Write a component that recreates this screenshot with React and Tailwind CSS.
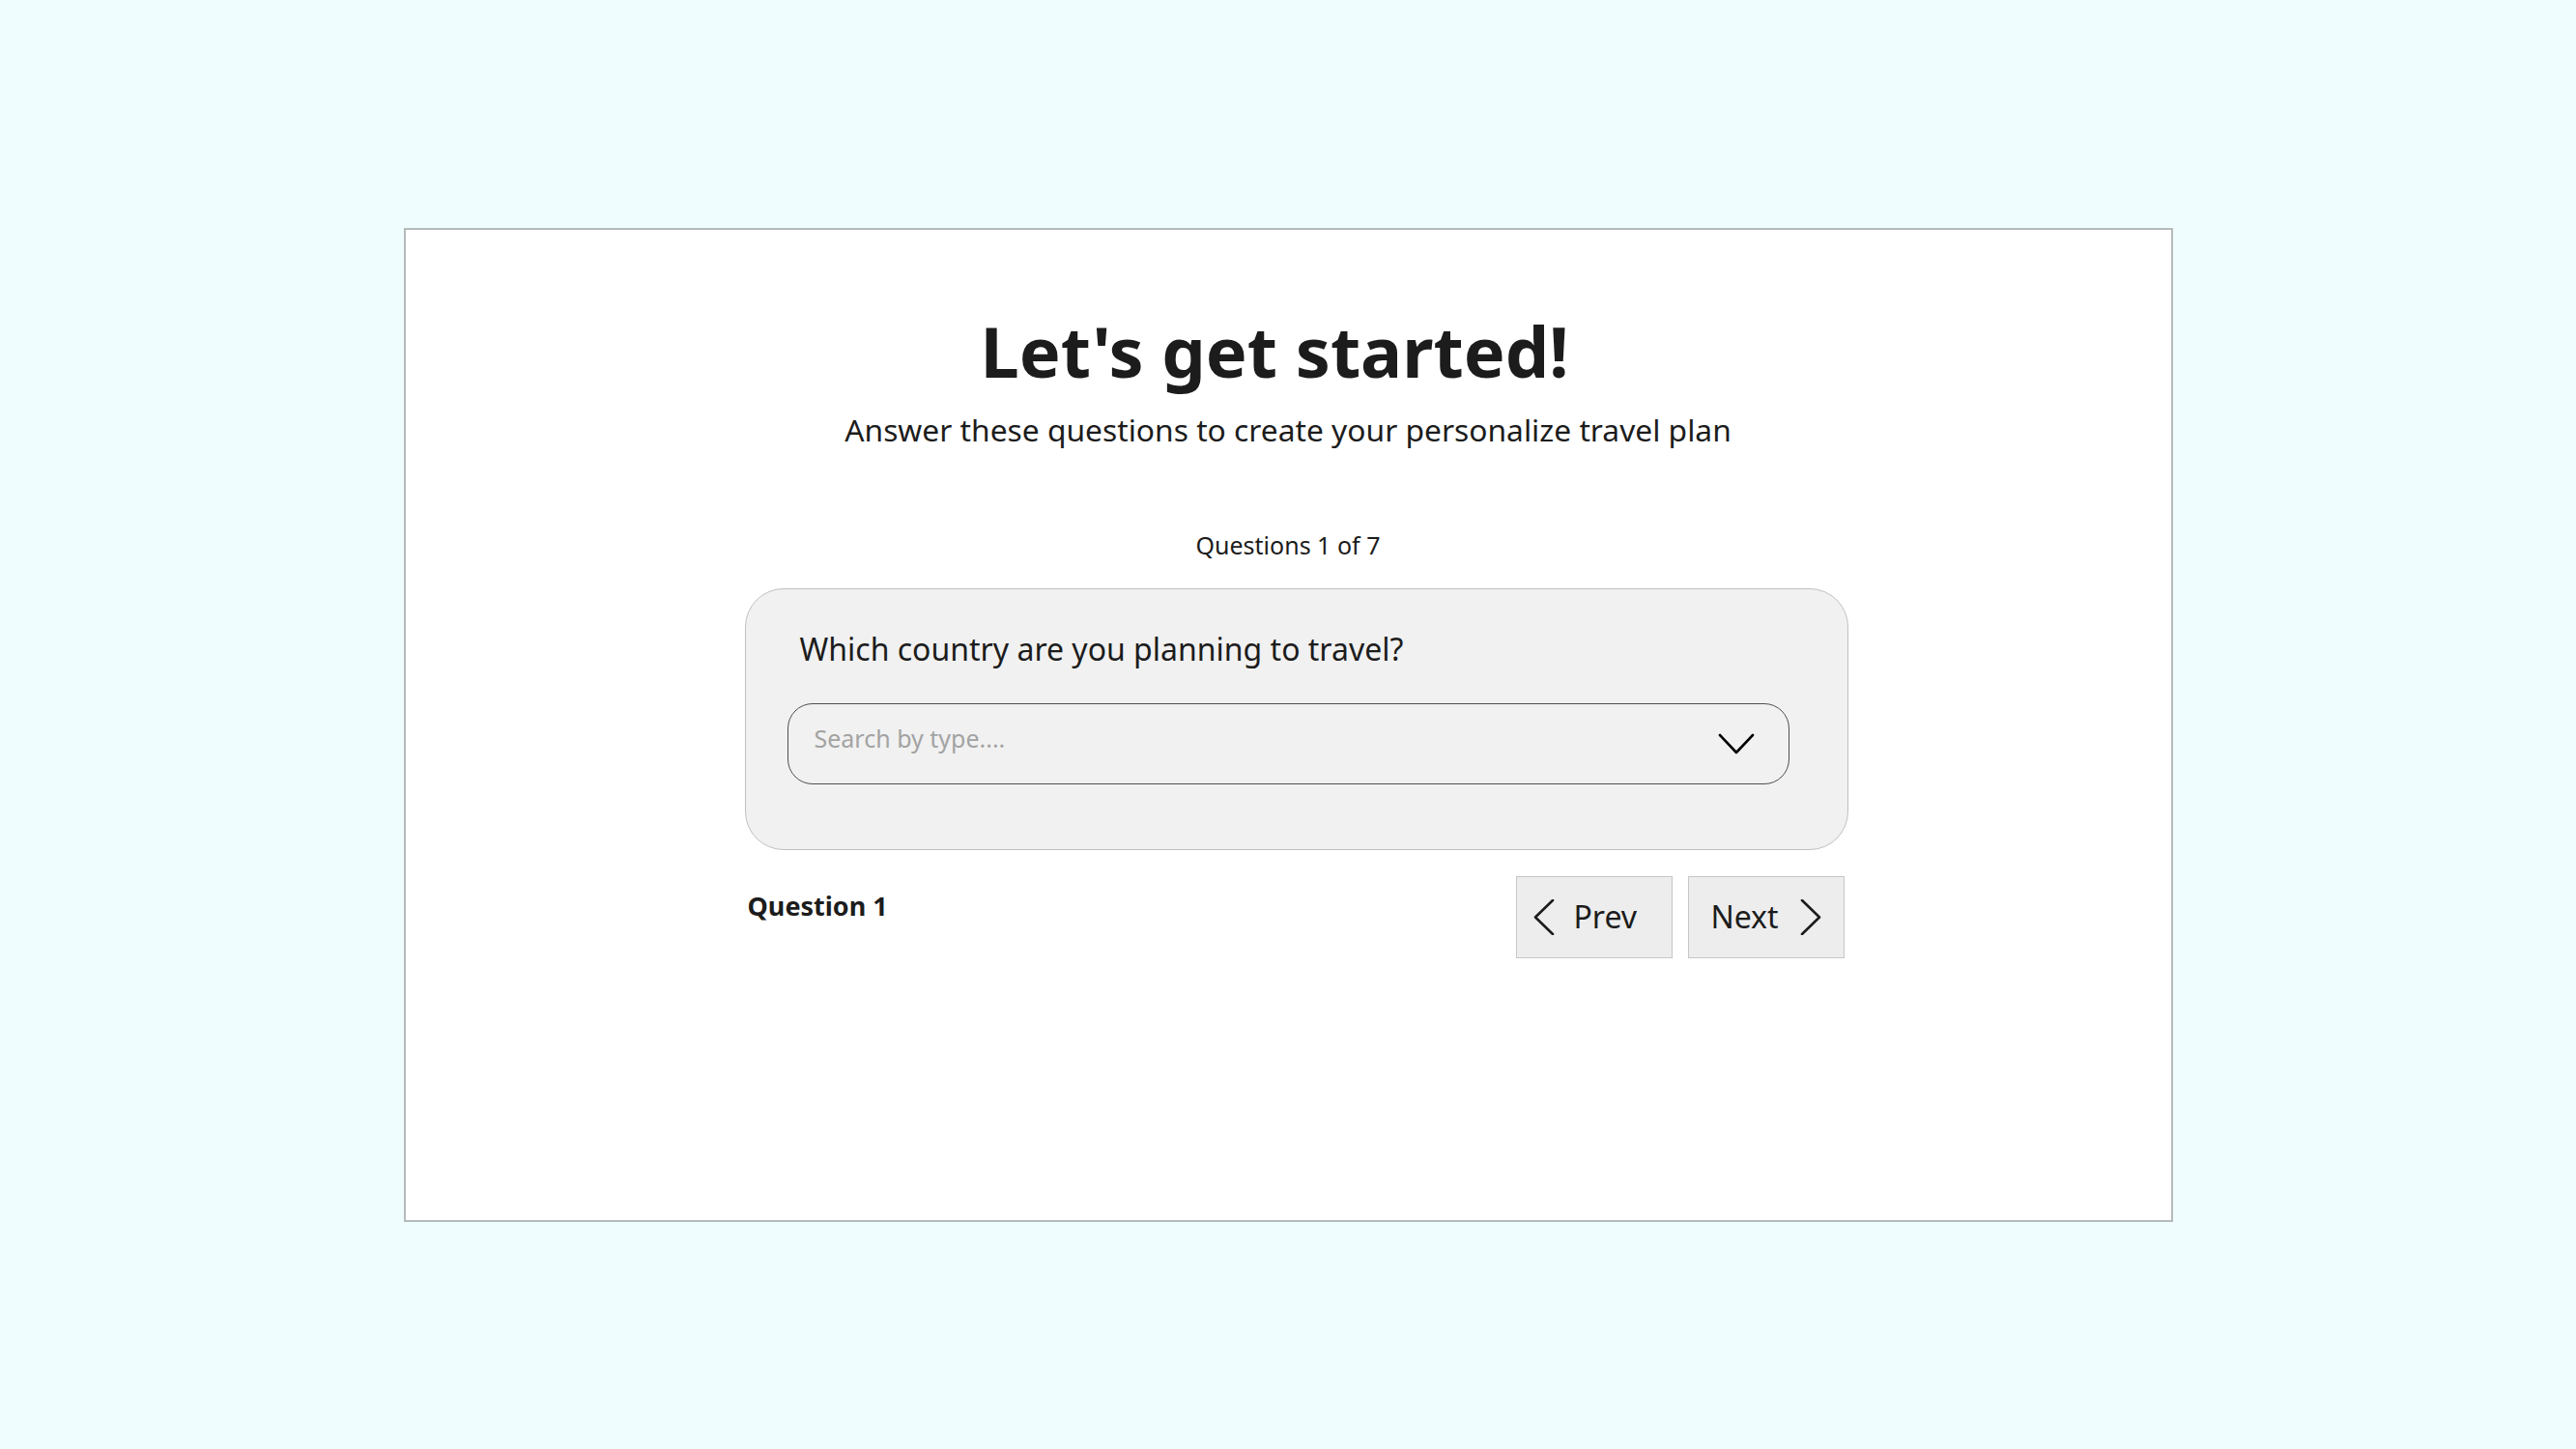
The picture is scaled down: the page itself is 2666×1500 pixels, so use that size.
import { useState } from "react";

function Chevron({ dir, className }) {
  const points = {
    down: "2,2 19,20 36,2",
    left: "20,1 2,18.5 20,36",
    right: "2,1 20,18.5 2,36",
  }[dir];
  const box = dir === "down" ? "0 0 38 22" : "0 0 22 37";
  return (
    <svg viewBox={box} className={className} fill="none" stroke="currentColor" strokeWidth="2.6" strokeLinecap="round" strokeLinejoin="round">
      <polyline points={points} />
    </svg>
  );
}

export default function App() {
  const [step, setStep] = useState(1);
  const [country, setCountry] = useState("");

  return (
    <div className="min-h-screen bg-[#effdfe] flex items-center justify-center font-['Noto_Sans',sans-serif] text-[#1c1c1c]">
      <div className="w-[1831px] h-[1029px] bg-white border-2 border-[#b5baba] pt-[89px]">
        <div className="flex flex-col items-center">
          <h1 className="mr-[28px] text-[72px] leading-none font-bold">Let's get started!</h1>
          <p className="mt-[30px] text-[31.75px] leading-none">
            Answer these questions to create your personalize travel plan
          </p>
          <p className="mt-[92px] text-[25px] leading-none">Questions {step} of 7</p>
        </div>

        <div className="ml-[351px] mt-[32px] w-[1142px]">
          <div className="h-[271px] rounded-[40px] border border-[#c0c0c0] bg-[#f1f1f1] px-[43px] pt-[46px]">
            <p className="pl-[13px] text-[32px] leading-none">Which country are you planning to travel?</p>
            <div className="mt-[40px] w-[1037px] h-[84px] rounded-[26px] border-[1.5px] border-[#4f4f4f] flex items-center pl-[27px] pr-[35px]">
              <input
                type="text"
                value={country}
                onChange={(e) => setCountry(e.target.value)}
                placeholder="Search by type...."
                className="flex-1 bg-transparent outline-none text-[25px] leading-none -mt-[13px] placeholder:text-[#a3a3a3]"
              />
              <Chevron dir="down" className="w-[38px] h-[22px] text-black" />
            </div>
          </div>

          <div className="mt-[27px] pl-[3px] pr-[4px] flex justify-between items-start">
            <p className="mt-[17px] text-[27px] leading-none font-bold">Question {step}</p>
            <div className="flex gap-[16px]">
              <button
                type="button"
                onClick={() => setStep((s) => Math.max(1, s - 1))}
                className="w-[162px] h-[85px] bg-[#ededed] border border-[#c6c6c6] flex items-center pl-[17px] gap-[20px] text-[32px]"
              >
                <Chevron dir="left" className="w-[22px] h-[37px]" />
                <span className="leading-none -mt-[2px]">Prev</span>
              </button>
              <button
                type="button"
                onClick={() => setStep((s) => Math.min(7, s + 1))}
                className="w-[162px] h-[85px] bg-[#ededed] border border-[#c6c6c6] flex items-center justify-center gap-[22px] text-[32px]"
              >
                <span className="leading-none -mt-[2px]">Next</span>
                <Chevron dir="right" className="w-[22px] h-[37px]" />
              </button>
            </div>
          </div>
        </div>
      </div>
    </div>
  );
}
